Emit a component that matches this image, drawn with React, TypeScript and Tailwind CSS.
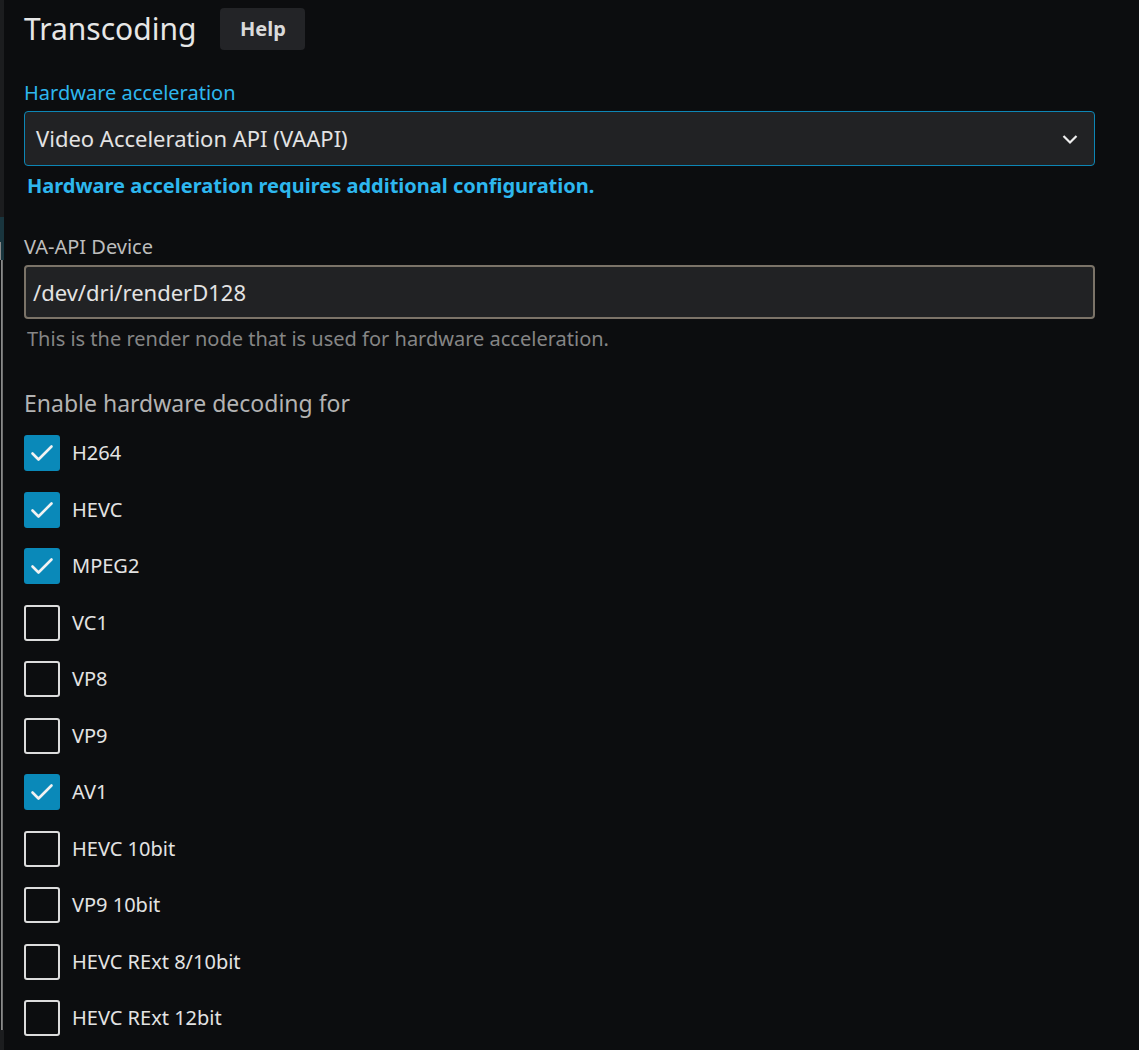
const codecs = [
  { name: "H264", on: true },
  { name: "HEVC", on: true },
  { name: "MPEG2", on: true },
  { name: "VC1", on: false },
  { name: "VP8", on: false },
  { name: "VP9", on: false },
  { name: "AV1", on: true },
  { name: "HEVC 10bit", on: false },
  { name: "VP9 10bit", on: false },
  { name: "HEVC RExt 8/10bit", on: false },
  { name: "HEVC RExt 12bit", on: false },
];

const Check = ({ on }: { on: boolean }) =>
  on ? (
    <div className="w-9 h-9 rounded-[3px] bg-[#0a89b9] flex items-center justify-center">
      <svg width="36" height="36" viewBox="0 0 36 36" fill="none">
        <path d="M8.5 18.5 L14.5 24.5 L27.5 11.5" stroke="#f2f2f2" strokeWidth="2.6" strokeLinecap="round" strokeLinejoin="round" />
      </svg>
    </div>
  ) : (
    <div className="w-9 h-9 rounded-[3px] border-2 border-[#dcdcdc]" />
  );

export default function App() {
  return (
    <div className="flex w-[1139px] h-[1050px] bg-[#0c0d0f] overflow-hidden font-['Noto_Sans',sans-serif]">
      {/* sidebar edge */}
      <div className="w-1 flex flex-col shrink-0">
        <div className="h-[217px] bg-[#1c1d1f]" />
        <div className="h-[25px] bg-[#19353e]" />
        <div className="h-[18px] bg-[#19353e] border-l border-[#8a8a8a]" />
        <div className="flex-1 border-l border-[#8a8a8a] ml-[1px] w-[2px] bg-[#6f6f6f]" />
        <div className="h-[20px] bg-[#1c1d1f]" />
      </div>

      <div className="flex-1 pl-5 pr-[44px]">
        <div className="flex items-center h-[56px] pt-[1px]">
          <h2 className="text-[30px] text-[#e6e6e6] leading-none">Transcoding</h2>
          <button className="ml-[24px] w-[85px] h-[42px] rounded-[4px] bg-[#232427] text-[#dadada] font-bold text-[20px]">
            Help
          </button>
        </div>

        <div className="mt-[25px] text-[20px] leading-[24px] text-[#2eb7ee]">Hardware acceleration</div>
        <div className="mt-[6px] h-[55px] rounded-[4px] border border-[#0d86b5] bg-[#212224] flex items-center justify-between pl-[11px] pr-[14px]">
          <span className="text-[22px] text-[#e3e3e3]">Video Acceleration API (VAAPI)</span>
          <svg width="20" height="20" viewBox="0 0 20 20" fill="none">
            <path d="M3.5 7 L10 13.5 L16.5 7" stroke="#eeeeee" strokeWidth="2.2" />
          </svg>
        </div>
        <div className="mt-[7px] ml-[3px] text-[20px] font-bold leading-[26px] text-[#2eb7ee]">
          Hardware acceleration requires additional configuration.
        </div>

        <div className="mt-[36px] text-[20px] leading-[24px] text-[#bdbdbd]">VA-API Device</div>
        <div className="mt-[6px] h-[54px] rounded-[4px] border-2 border-[#7b7368] bg-[#212224] flex items-center pl-[7px]">
          <span className="text-[22px] text-[#e3e3e3]">/dev/dri/renderD128</span>
        </div>
        <div className="mt-[7px] ml-[3px] text-[20px] leading-[26px] text-[#858585]">
          This is the render node that is used for hardware acceleration.
        </div>

        <div className="mt-[36px] text-[23px] leading-[30px] text-[#b3b3b3]">Enable hardware decoding for</div>
        <div className="mt-[7px] flex flex-col">
          {codecs.map((c) => (
            <div key={c.name} className="h-[56.5px] flex items-center gap-3">
              <Check on={c.on} />
              <span className="text-[20px] text-[#e3e3e3]">{c.name}</span>
            </div>
          ))}
        </div>
      </div>
    </div>
  );
}
